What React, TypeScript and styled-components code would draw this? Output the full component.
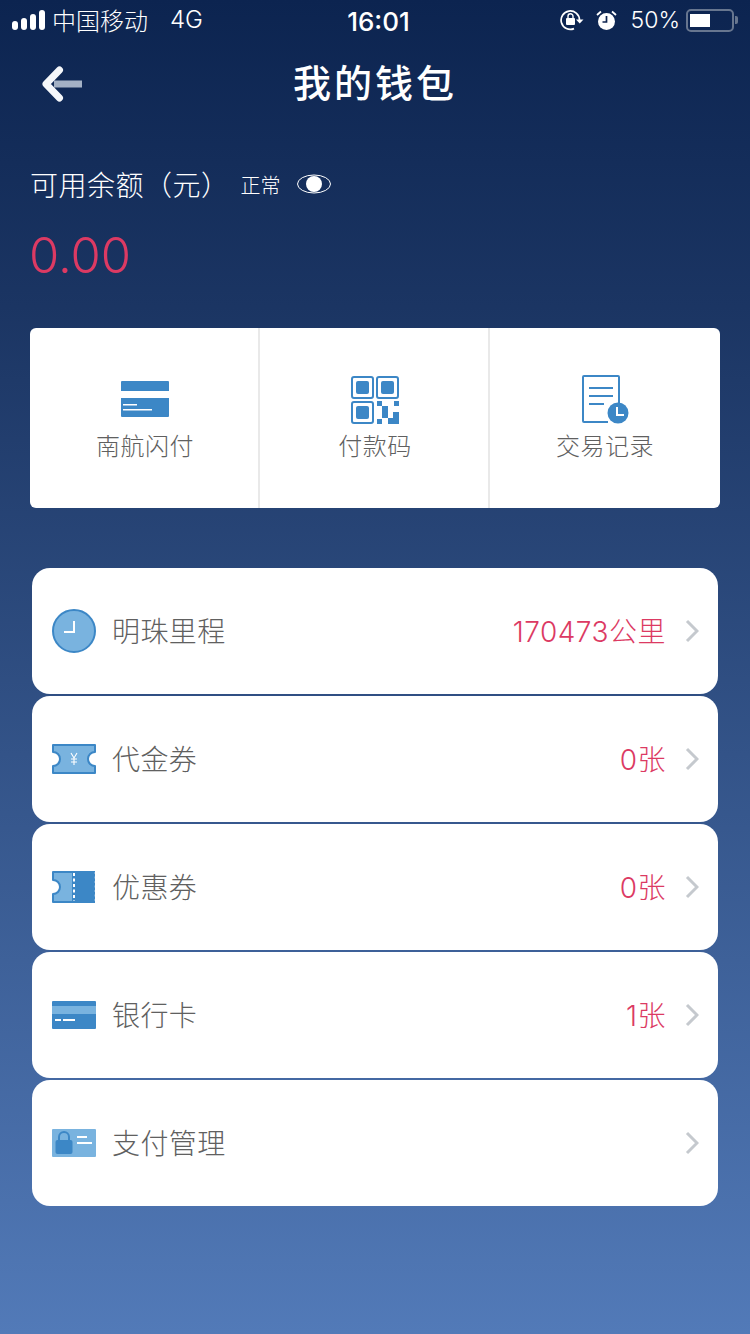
import React from "react";
import styled, { createGlobalStyle } from "styled-components";

const GlobalStyle = createGlobalStyle`
  html, body {
    margin: 0;
    padding: 0;
  }
  * {
    box-sizing: border-box;
  }
`;

const Page = styled.div`
  width: 750px;
  height: 1334px;
  overflow: hidden;
  background: linear-gradient(180deg, #0c2450 0%, #1b3563 23%, #527ab8 100%);
  font-family: Inter, "Noto Sans CJK SC", sans-serif;
`;

const StatusBar = styled.div`
  height: 40px;
  padding: 0 12px;
  display: grid;
  grid-template-columns: 1fr auto 1fr;
  align-items: center;
  color: #fff;
  font-size: 24px;
  font-weight: 300;
`;

const StatusSide = styled.div<{ end?: boolean }>`
  display: flex;
  align-items: center;
  padding-bottom: ${(props) => (props.end ? 0 : 1)}px;
  justify-content: ${(props) => (props.end ? "flex-end" : "flex-start")};
`;

const Signal = styled.div`
  display: flex;
  align-items: flex-end;
  gap: 3px;
  margin-right: 7px;
`;

const SignalBar = styled.span<{ h: number }>`
  width: 6px;
  height: ${(props) => props.h}px;
  border-radius: 3px;
  background: #fff;
`;

const NetworkType = styled.span`
  margin-left: 22px;
`;

const Clock = styled.div`
  padding: 2px 0 0 7px;
  font-size: 26px;
  font-weight: 500;
`;

const Percent = styled.span`
  margin: 0 6px 0 14px;
  font-size: 23px;
`;

const Battery = styled.div`
  width: 48px;
  height: 23px;
  padding: 3px 2px;
  border: 2px solid #67768f;
  border-radius: 5px;
`;

const BatteryLevel = styled.div`
  width: 20px;
  height: 100%;
  background: #fff;
`;

const BatteryCap = styled.div`
  width: 3px;
  height: 8px;
  margin-left: 1px;
  background: #67768f;
  border-radius: 0 2px 2px 0;
`;

const NavBar = styled.div`
  height: 88px;
  padding-left: 41px;
  position: relative;
  display: flex;
  align-items: center;
`;

const NavTitle = styled.h1`
  position: absolute;
  top: 0;
  left: 0;
  right: 0;
  margin: 0;
  text-align: center;
  color: #fff;
  font-size: 38px;
  font-weight: 500;
  line-height: 86px;
  letter-spacing: 3px;
`;

const Balance = styled.div`
  padding: 36px 30px 0;
  height: 200px;
`;

const BalanceHead = styled.div`
  display: flex;
  align-items: center;
  height: 40px;
  color: #fff;
`;

const BalanceLabel = styled.span`
  font-size: 28px;
  font-weight: 300;
  letter-spacing: 0.5px;
`;

const BalanceStatus = styled.span`
  margin: 0 16px 0 11px;
  font-size: 20px;
  font-weight: 300;
`;

const Amount = styled.div`
  margin: 22px 0 0 -1px;
  color: #dc3a63;
  font-size: 49px;
  font-weight: 300;
  line-height: 60px;
`;

const QuickPanel = styled.div`
  margin: 0 30px;
  height: 180px;
  display: grid;
  grid-template-columns: 230px 230px 230px;
  background: #fff;
  border-radius: 6px;
  overflow: hidden;
`;

const QuickItem = styled.div`
  display: flex;
  flex-direction: column;
  align-items: center;
  padding: 48px 0 0 2px;
  color: #606060;
  font-size: 24px;
  font-weight: 300;
  border-right: 2px solid #e9e9e9;

  &:last-child {
    padding-left: 0;
    border-right: 0;
  }
`;

const QuickIcon = styled.div`
  height: 48px;
  display: flex;
  align-items: center;
  justify-content: center;
`;

const QuickLabel = styled.div`
  margin-top: 5px;
  line-height: 36px;
  letter-spacing: 0.5px;
`;

const RowList = styled.div`
  margin: 60px 32px 0;
  display: flex;
  flex-direction: column;
  gap: 2px;
`;

const Row = styled.div`
  height: 126px;
  padding: 0 19px 0 20px;
  display: flex;
  align-items: center;
  background: #fff;
  border-radius: 18px;
`;

const RowLabel = styled.div`
  margin-left: 16px;
  padding-bottom: 2px;
  flex: 1;
  color: #606060;
  font-size: 28px;
  font-weight: 300;
  letter-spacing: 0.4px;
`;

const RowValue = styled.div`
  margin-right: 19px;
  padding-bottom: 2px;
  color: #dc3a63;
  font-size: 28px;
  font-weight: 300;
  letter-spacing: 0.5px;
`;

const BLUE = "#3c87c6";
const LIGHT = "#79b3df";

const BackIcon = () => (
  <svg width="42" height="36" viewBox="0 0 42 36">
    <rect x="13" y="14.5" width="28" height="7" fill="#a4b1c5" />
    <path d="M18.5 4 L5 18 L18.5 32" fill="none" stroke="#f5f7fa" strokeWidth="7" strokeLinecap="round" strokeLinejoin="round" />
  </svg>
);

const RotationLockIcon = () => (
  <svg width="24" height="22" viewBox="0 0 24 22" style={{ marginRight: 12 }}>
    <path d="M19.5 11 A9.2 9.2 0 1 0 14 19.6" fill="none" stroke="#fff" strokeWidth="1.7" />
    <path d="M16 10.5 H23.5 L19.7 14.5 Z" fill="#fff" />
    <rect x="6" y="9" width="9" height="7" rx="1" fill="#fff" />
    <path d="M8 9 V7.2 A2.5 2.5 0 0 1 13 7.2 V9" fill="none" stroke="#fff" strokeWidth="1.4" />
  </svg>
);

const AlarmIcon = () => (
  <svg width="21" height="21" viewBox="0 0 21 21">
    <circle cx="10.5" cy="11.5" r="8.5" fill="#fff" />
    <path d="M10.5 6 V12 H6.5" fill="none" stroke="#0e2450" strokeWidth="1.7" />
    <path d="M1 5 L5 1.5 M20 5 L16 1.5" stroke="#fff" strokeWidth="1.8" />
  </svg>
);

const EyeIcon = () => (
  <svg width="34" height="20" viewBox="0 0 34 20">
    <ellipse cx="17" cy="10" rx="16.5" ry="9" fill="none" stroke="#fff" strokeWidth="1" />
    <circle cx="17" cy="10" r="8" fill="#fff" />
  </svg>
);

const FlashPayIcon = () => (
  <svg width="48" height="38" viewBox="0 0 48 38">
    <path d="M1 0 H47 A1 1 0 0 1 48 1 V10 H0 V1 A1 1 0 0 1 1 0 Z" fill={BLUE} />
    <path d="M0 17 H48 V35 A1 1 0 0 1 47 36 H1 A1 1 0 0 1 0 35 Z" fill={BLUE} />
    <rect x="2" y="23" width="14" height="1.5" fill="#fff" />
    <rect x="2" y="28" width="29" height="1.5" fill="#fff" />
  </svg>
);

const QrIcon = () => (
  <svg width="48" height="48" viewBox="0 0 48 48">
    {[
      [0, 0],
      [25, 0],
      [0, 25],
    ].map(([x, y]) => (
      <g key={`${x}-${y}`}>
        <rect x={x + 1} y={y + 1} width="21" height="21" rx="2" fill="none" stroke={BLUE} strokeWidth="2" />
        <rect x={x + 5} y={y + 5} width="13" height="13" rx="2" fill={BLUE} />
      </g>
    ))}
    <path
      d="M26 25 H31 V30 H26 Z M43 25 H48 V30 H43 Z M31 30 H37 V42 H31 Z M42 36 H48 V48 H37 V42 H42 Z M26 43 H31 V48 H26 Z"
      fill={BLUE}
    />
  </svg>
);

const RecordIcon = () => (
  <svg width="50" height="50" viewBox="-2 0 50 50">
    <path d="M32 33 H37 V2 A1 1 0 0 0 36 1 H2 A1 1 0 0 0 1 2 V46 A1 1 0 0 0 2 47 H26" fill="none" stroke={BLUE} strokeWidth="2" />
    <path d="M7 13 H31 M7 21 H31 M7 29 H22" stroke={BLUE} strokeWidth="2" />
    <circle cx="36" cy="38" r="10.5" fill={BLUE} />
    <path d="M35 32 V40 H42" fill="none" stroke="#fff" strokeWidth="2" />
  </svg>
);

const MileageIcon = () => (
  <svg width="44" height="44" viewBox="0 0 44 44">
    <circle cx="22" cy="22" r="21" fill={LIGHT} stroke={BLUE} strokeWidth="2" />
    <path d="M22 12 V23 H12" fill="none" stroke="#fff" strokeWidth="2" />
  </svg>
);

const VoucherIcon = () => (
  <svg width="44" height="30" viewBox="0 0 44 30">
    <path
      d="M1 1 H43 V8 A7 7 0 0 0 43 22 V29 H1 V22 A7 7 0 0 0 1 8 Z"
      fill={LIGHT}
      stroke={BLUE}
      strokeWidth="2"
      strokeLinejoin="round"
    />
    <path d="M19 9 L22 14 L25 9 M22 14 V21 M19 15 H25 M19 18 H25" fill="none" stroke="#fff" strokeWidth="1.1" />
  </svg>
);

const CouponIcon = () => (
  <svg width="44" height="32" viewBox="0 0 44 32">
    <path
      d="M1 1 H21 V31 H1 V23 A7 7 0 0 0 1 9 Z"
      fill={LIGHT}
      stroke={BLUE}
      strokeWidth="2"
      strokeLinejoin="round"
    />
    <rect x="21" y="0" width="22" height="32" fill={BLUE} />
    <path d="M22 2 V30" stroke="#fff" strokeWidth="2" strokeDasharray="3 2.5" />
    <path d="M43.5 1 V31" stroke="#fff" strokeWidth="1.5" strokeDasharray="2 2.5" />
  </svg>
);

const BankCardIcon = () => (
  <svg width="44" height="28" viewBox="0 0 44 28">
    <rect width="44" height="28" rx="1" fill={BLUE} />
    <rect y="5" width="44" height="8" fill={LIGHT} />
    <rect x="3" y="18" width="6" height="2" fill="#fff" />
    <rect x="11" y="18" width="12" height="2" fill="#fff" />
  </svg>
);

const PaySettingIcon = () => (
  <svg width="44" height="28" viewBox="0 0 44 28">
    <rect width="44" height="28" rx="1" fill={LIGHT} />
    <rect x="3.5" y="11" width="17" height="14" rx="2" fill={BLUE} />
    <path d="M7 11 V8 A5 5 0 0 1 17 8 V11" fill="none" stroke={BLUE} strokeWidth="2" />
    <rect x="25" y="7" width="10" height="2" fill="#fff" />
    <rect x="25" y="13" width="15" height="2" fill="#fff" />
  </svg>
);

const Chevron = () => (
  <svg width="14" height="24" viewBox="0 0 14 24">
    <path d="M2 2 L12 12 L2 22" fill="none" stroke="#c5c9ce" strokeWidth="3" />
  </svg>
);

const quickItems = [
  { label: "南航闪付", icon: <FlashPayIcon /> },
  { label: "付款码", icon: <QrIcon /> },
  { label: "交易记录", icon: <RecordIcon /> },
];

const rows = [
  { label: "明珠里程", value: "170473公里", icon: <MileageIcon /> },
  { label: "代金券", value: "0张", icon: <VoucherIcon /> },
  { label: "优惠券", value: "0张", icon: <CouponIcon /> },
  { label: "银行卡", value: "1张", icon: <BankCardIcon /> },
  { label: "支付管理", value: "", icon: <PaySettingIcon /> },
];

const App = () => {
  return (
    <Page>
      <GlobalStyle />
      <StatusBar>
        <StatusSide>
          <Signal>
            <SignalBar h={9} />
            <SignalBar h={12} />
            <SignalBar h={16} />
            <SignalBar h={20} />
          </Signal>
          中国移动
          <NetworkType>4G</NetworkType>
        </StatusSide>
        <Clock>16:01</Clock>
        <StatusSide end>
          <RotationLockIcon />
          <AlarmIcon />
          <Percent>50%</Percent>
          <Battery>
            <BatteryLevel />
          </Battery>
          <BatteryCap />
        </StatusSide>
      </StatusBar>

      <NavBar>
        <BackIcon />
        <NavTitle>我的钱包</NavTitle>
      </NavBar>

      <Balance>
        <BalanceHead>
          <BalanceLabel>可用余额（元）</BalanceLabel>
          <BalanceStatus>正常</BalanceStatus>
          <EyeIcon />
        </BalanceHead>
        <Amount>0.00</Amount>
      </Balance>

      <QuickPanel>
        {quickItems.map((item) => (
          <QuickItem key={item.label}>
            <QuickIcon>{item.icon}</QuickIcon>
            <QuickLabel>{item.label}</QuickLabel>
          </QuickItem>
        ))}
      </QuickPanel>

      <RowList>
        {rows.map((row) => (
          <Row key={row.label}>
            {row.icon}
            <RowLabel>{row.label}</RowLabel>
            {row.value && <RowValue>{row.value}</RowValue>}
            <Chevron />
          </Row>
        ))}
      </RowList>
    </Page>
  );
};

export default App;
